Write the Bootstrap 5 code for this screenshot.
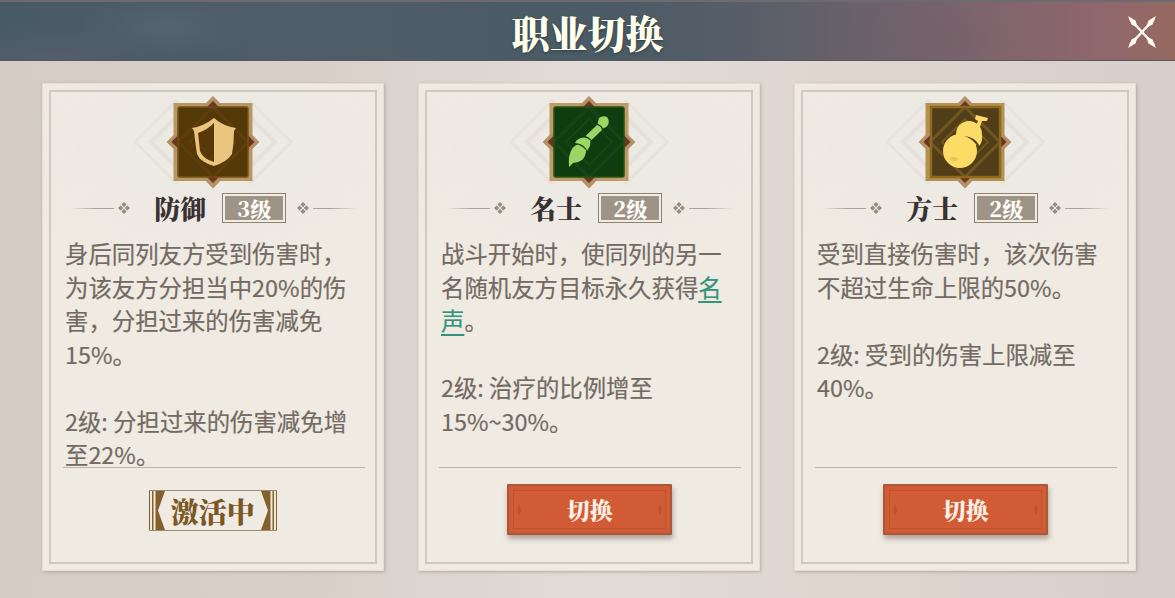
<!DOCTYPE html>
<html lang="zh-CN">
<head>
    <meta charset="UTF-8">
    <meta name="viewport" content="width=device-width, initial-scale=1">
    <title>职业切换</title>
    <link href="https://cdn.jsdelivr.net/npm/bootstrap@5.3.0/dist/css/bootstrap.min.css" rel="stylesheet">
    <style>
    body {
      font-family: "Noto Sans CJK SC", sans-serif;
      height: 598px;
      overflow: hidden;
      background: linear-gradient(90deg, #d5ccc5 0, #d8cfc8 25%, #e2dcd7 50%, #dfd5cf 75%, #d8cfcb 100%);
    }
    .serif-title {
      font-family: "Noto Serif CJK SC", "Source Han Serif SC", "Liberation Serif", "Noto Sans CJK SC", serif;
      font-weight: 900;
      white-space: nowrap;
      line-height: 1;
    }
    .top-bar {
      height: 61px;
      padding: 2px 18px 0 48px;
      border-top: 2px solid #6d6a70;
      border-bottom: 1px solid #57585f;
      background:
        radial-gradient(ellipse 90px 34px at 165px 25px, #66738055, transparent),
        radial-gradient(ellipse 100px 40px at 50px 60px, #6a687655, transparent),
        radial-gradient(ellipse 90px 30px at 930px 38px, #705f6477, transparent),
        linear-gradient(90deg, #485a65 0, #4e5d68 25%, #4b5b65 52%, #575e69 63%, #6b616b 74%, #7f646d 84%, #90676c 94%, #956960 100%);
    }
    .top-bar h1 { font-size: 38px; color: #fffeea; text-shadow: 0 1px 3px #2c3b45; }
    .card-list { padding: 22px 39px 0 41.5px; gap: 33.5px; }
    .job-card {
      flex: 1 1 0;
      height: 488px;
      padding: 10px 18px 0 20px;
      border: 1px solid #e6ddcf;
      background: radial-gradient(ellipse 220px 130px at 50% 60px, #ece9e4, transparent), #efeae2;
      outline: 2px solid #cec8be;
      outline-offset: -9px;
      box-shadow: 1px 1px 3px #8d817880;
    }
    .job-icon { width: 160px; height: 98px; margin-top: -1px; position: relative; right: 1px; }
    .title-row { height: 30px; margin-top: 2px; }
    .job-name { width: 53px; margin: 0 15px 0 20px; font-size: 26px; color: #393233; }
    .level {
      width: 64px;
      height: 30px;
      margin-right: 7px;
      border: 1px solid #8c8172;
      padding: 2px;
      background: #f3eee4;
    }
    .level span { background: #9d9487; color: #fffdf8; font-size: 21px; }
    .rule { width: 44px; height: 1px; background: linear-gradient(90deg, transparent, #aaa298 60%); }
    .rule.flip { background: linear-gradient(270deg, transparent, #aaa298 60%); }
    .knot { width: 12px; height: 12px; margin: 0 4px; fill: #968b7e; }
    .desc {
      height: 245px;
      padding: 14px 0 0 2.5px;
      border-bottom: 1px solid #b9b4ac;
      font-size: 23.4px;
      line-height: 33.5px;
      color: #736a64;
      white-space: nowrap;
      -webkit-text-stroke: .2px #736a64;
    }
    .term { color: #35927c; -webkit-text-stroke-color: #35927c; text-decoration: underline; text-decoration-thickness: 2px; text-underline-offset: 4px; }
    .btn-switch {
      width: 165px;
      height: 51px;
      margin-top: 16px;
      border: 2px solid #a9583c;
      border-radius: 1px;
      background: #d15b34;
      color: #fff0e6;
      font-size: 23px;
      outline: 1px solid #bf522f;
      outline-offset: -7px;
      box-shadow: 1px 4px 5px #7b6a5e88;
    }
    .btn-switch:hover { background: #da6840; color: #fff; }
    .tick { width: 4px; height: 12px; fill: #bd502e; }
    .active-mark { width: 128px; height: 41px; margin-top: 22px; border: solid #9a8c74; border-width: 1px 0; color: #7b5725; position: relative; right: 1px; }
    .active-mark svg { fill: #85602a; }
    .active-mark span { font-size: 28px; }
    </style>
</head>
<body>

<svg width="0" height="0" class="position-absolute">
    <defs>
        <!-- faint diamonds behind every emblem -->
        <g id="backdrop" fill="none">
            <path d="M44 7 2 49 44 91M116 7 158 49 116 91" stroke="#e7e2dc" stroke-width="3"/>
            <path d="M48 19 18 49 48 79M112 19 142 49 112 79" stroke="#e5e0da" stroke-width="4"/>
        </g>
        <!-- diamond points that stick out of the square frame -->
        <g id="points">
            <path d="M65 18 80 3 95 18zM65 80 80 95.500 95 80zM49 34 33.500 49 49 64zM111 34 126.500 49 111 64z" fill="#b59065"/>
            <path d="M69 19 80 8 91 19zM69 79 80 90 91 79zM50 37 38.500 49 50 60zM110 37 121.500 49 110 60z" fill="#6c351f"/>
        </g>
        <g id="inner" fill="none">
            <path d="M80 14 115 49 80 84 45 49z" stroke-width="3"/>
            <path d="M80 26 103 49 80 72 57 49z" stroke-width="2"/>
        </g>
        <path id="knot" d="M6 0 8.600 2.600 6 5.200 3.400 2.600zM6 6.800 8.600 9.400 6 12 3.400 9.400zM2.600 3.400 5.200 6 2.600 8.600 0 6zM9.400 3.400 12 6 9.400 8.600 6.800 6z"/>
    </defs>
</svg>

<header class="top-bar d-flex align-items-center">
    <h1 class="serif-title flex-fill text-center mb-0">职业切换</h1>
    <svg width="30" height="32" viewBox="0 0 30 32">
        <path d="M3 3 27 29M27 3 3 29" stroke="#fff8ec" stroke-width="2.500"/>
        <path d="M1 0 8.500 4.500 11 12 4.500 8.500zM29 0 21.500 4.500 19 12 25.500 8.500zM1 32 8.500 27.500 11 20 4.500 23.500zM29 32 21.500 27.500 19 20 25.500 23.500z" fill="#fff8ec"/>
    </svg>
</header>

<main class="card-list d-flex">
    <section class="card job-card rounded-0">
        <svg class="job-icon mx-auto overflow-visible flex-shrink-0" viewBox="0 0 160 98">
            <use href="#backdrop"/>
            <rect x="40.500" y="10" width="79" height="78" fill="#b99762"/>
            <use href="#points"/>
            <rect x="45" y="14" width="70" height="70" rx="2" fill="#553808" stroke="#755014" stroke-width="1.500"/>
            <use href="#inner" stroke="#694812" opacity=".4"/>
            <path d="M81 25Q90 33 103 35L101 38Q101 50 99 61Q94 69 81 73Q67 69 64 61Q62 48 61 38L59 35Q71 33 81 25z" fill="#e9c57d"/>
            <path d="M81 30V69Q70 66 67 58L65 40Q74 37 81 30z" fill="#573809"/>
        </svg>
        <div class="title-row d-flex align-items-center justify-content-center">
            <i class="rule"></i>
            <svg class="knot"><use href="#knot"/></svg>
            <h2 class="job-name serif-title mb-0">防御</h2>
            <div class="level d-flex"><span class="serif-title flex-fill d-flex align-items-center justify-content-center">3级</span></div>
            <svg class="knot"><use href="#knot"/></svg>
            <i class="rule flip"></i>
        </div>
        <div class="desc">身后同列友方受到伤害时，<br>为该友方分担当中20%的伤<br>害，分担过来的伤害减免<br>15%。<br><br>2级: 分担过来的伤害减免增<br>至22%。</div>
        <div class="active-mark d-flex align-items-center justify-content-between mx-auto">
            <svg width="16" height="39"><path d="M0 0h1v39H0zM3 0h1.500v39H3zM6.500 0H16L9 19.500 16 39H6.500z"/></svg>
            <span class="serif-title">激活中</span>
            <svg width="16" height="39"><path d="M16 0h-1v39h1zM13 0h-1.500v39H13zM9.500 0H0L7 19.500 0 39h9.500z"/></svg>
        </div>
    </section>

    <section class="card job-card rounded-0">
        <svg class="job-icon mx-auto overflow-visible flex-shrink-0" viewBox="0 0 160 98">
            <use href="#backdrop"/>
            <rect x="40.500" y="10" width="79" height="78" fill="#bf9b68"/>
            <use href="#points"/>
            <rect x="45" y="14" width="70" height="70" rx="2" fill="#103d10" stroke="#28500f" stroke-width="1.500"/>
            <use href="#inner" stroke="#245225" opacity=".4"/>
            <g fill="#9bd764">
                <path d="M60 74Q59 62 63 56Q67 51 70 52Q75 54 77 57Q77 63 73 67Q69 70 64 70z"/>
                <path d="M66 50Q68 45 75 44.500Q79 45 81.500 47.500L81 53L78 58Q77 54 72 51.500Q69 50 66 50z"/>
                <path d="M76.500 43 88 32Q92 33 93 37L82.500 47Q80 44 76.500 43z"/>
                <path d="M88.500 30.500 90 25Q94 22 98 24Q101 28 99 32Q97 35 94 35.500Q92 32 88.500 30.500z"/>
            </g>
        </svg>
        <div class="title-row d-flex align-items-center justify-content-center">
            <i class="rule"></i>
            <svg class="knot"><use href="#knot"/></svg>
            <h2 class="job-name serif-title mb-0">名士</h2>
            <div class="level d-flex"><span class="serif-title flex-fill d-flex align-items-center justify-content-center">2级</span></div>
            <svg class="knot"><use href="#knot"/></svg>
            <i class="rule flip"></i>
        </div>
        <div class="desc">战斗开始时，使同列的另一<br>名随机友方目标永久获得<span class="term">名</span><br><span class="term">声</span>。<br><br>2级: 治疗的比例增至<br>15%~30%。</div>
        <button type="button" class="btn btn-switch d-flex align-items-center justify-content-between mx-auto px-2">
            <svg class="tick"><path d="M2 0 4 6 2 12 0 6z"/></svg>
            <span class="serif-title">切换</span>
            <svg class="tick"><path d="M2 0 4 6 2 12 0 6z"/></svg>
        </button>
    </section>

    <section class="card job-card rounded-0">
        <svg class="job-icon mx-auto overflow-visible flex-shrink-0" viewBox="0 0 160 98">
            <use href="#backdrop"/>
            <rect x="40.500" y="10" width="79" height="78" fill="#b4914f"/>
            <use href="#points"/>
            <rect x="46" y="14" width="69" height="70" fill="#513d17" stroke="#8b6a20" stroke-width="2.500"/>
            <use href="#inner" stroke="#806624" opacity=".65"/>
            <g fill="#fddb67">
                <path d="M91 22 103 25 102 28 97 28 95 34 91 32 93 28 90 26z"/>
                <circle cx="84" cy="41" r="13"/>
                <path d="M85 42H97Q98 49 94 53Q90 47 83 45z"/>
                <circle cx="75" cy="58" r="17"/>
            </g>
            <path d="M79 43Q90 44 94 52Q92 53 90 50Q86 45 79 43z" fill="#513d17"/>
            <ellipse cx="69" cy="66" rx="4" ry="2" fill="#eac452"/>
        </svg>
        <div class="title-row d-flex align-items-center justify-content-center">
            <i class="rule"></i>
            <svg class="knot"><use href="#knot"/></svg>
            <h2 class="job-name serif-title mb-0">方士</h2>
            <div class="level d-flex"><span class="serif-title flex-fill d-flex align-items-center justify-content-center">2级</span></div>
            <svg class="knot"><use href="#knot"/></svg>
            <i class="rule flip"></i>
        </div>
        <div class="desc">受到直接伤害时，该次伤害<br>不超过生命上限的50%。<br><br>2级: 受到的伤害上限减至<br>40%。</div>
        <button type="button" class="btn btn-switch d-flex align-items-center justify-content-between mx-auto px-2">
            <svg class="tick"><path d="M2 0 4 6 2 12 0 6z"/></svg>
            <span class="serif-title">切换</span>
            <svg class="tick"><path d="M2 0 4 6 2 12 0 6z"/></svg>
        </button>
    </section>
</main>

<script src="https://cdn.jsdelivr.net/npm/bootstrap@5.3.0/dist/js/bootstrap.bundle.min.js"></script>
</body>
</html>
